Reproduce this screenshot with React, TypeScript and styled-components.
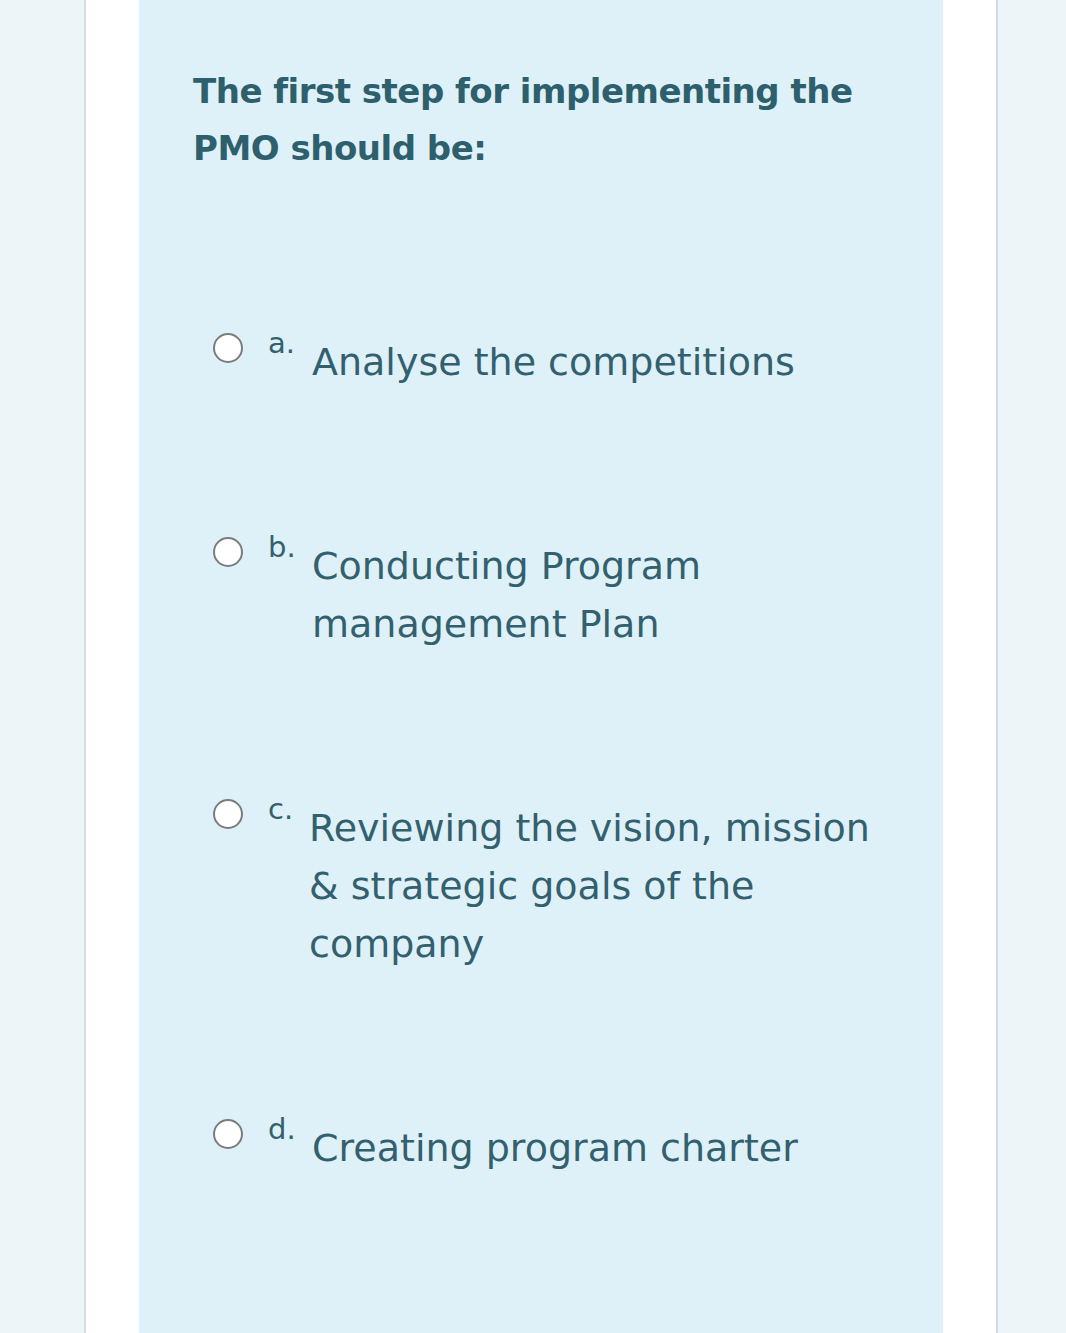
import styled, { createGlobalStyle } from "styled-components";

const GlobalStyle = createGlobalStyle`
  html, body {
    margin: 0;
    padding: 0;
    background: #edf5f9;
  }
`;

const Page = styled.div`
  min-height: 1333px;
  display: flex;
  padding-left: 84px;
  background: #edf5f9;
  font-family: "DejaVu Sans", "Noto Sans", Arial, sans-serif;
`;

const Sheet = styled.div`
  width: 804px;
  padding: 0 53px;
  background: #ffffff;
  border-left: 2px solid #d5dbde;
  border-right: 2px solid #d5dbde;
  display: flex;
`;

const Card = styled.div`
  flex: 1;
  background: #dff1f8;
  padding: 63px 30px 0 54px;
`;

const Question = styled.h1`
  margin: 0 0 143px;
  font-size: 34px;
  line-height: 57px;
  font-weight: 700;
  color: #2d5f6d;
  letter-spacing: -0.5px;
`;

const Options = styled.div`
  display: flex;
  flex-direction: column;
  gap: 133px;
  padding-left: 20px;
`;

const Option = styled.label`
  display: flex;
  align-items: flex-start;
  color: #33606e;
`;

const Radio = styled.span`
  flex: none;
  width: 26px;
  height: 26px;
  margin-top: 13px;
  border-radius: 50%;
  border: 2px solid #7c7c7c;
  background: #ffffff;
`;

const Letter = styled.span<{ $gap: number }>`
  flex: none;
  margin-left: 25px;
  margin-right: ${(p) => p.$gap}px;
  margin-top: 3px;
  font-size: 29px;
  line-height: 40px;
  min-width: 34px;
`;

const Answer = styled.span`
  margin-top: 13px;
  font-size: 38px;
  line-height: 58px;
  max-width: 580px;
`;

const options = [
  { letter: "a.", text: "Analyse the competitions", gap: 10 },
  { letter: "b.", text: "Conducting Program management Plan", gap: 10 },
  { letter: "c.", text: "Reviewing the vision, mission & strategic goals of the company", gap: 7 },
  { letter: "d.", text: "Creating program charter", gap: 10 },
];

export default function App() {
  return (
    <>
      <GlobalStyle />
      <Page>
        <Sheet>
          <Card>
            <Question>
              The first step for implementing the
              <br />
              PMO should be:
            </Question>
            <Options>
              {options.map((o) => (
                <Option key={o.letter}>
                  <Radio />
                  <Letter $gap={o.gap}>{o.letter}</Letter>
                  <Answer>{o.text}</Answer>
                </Option>
              ))}
            </Options>
          </Card>
        </Sheet>
      </Page>
    </>
  );
}
